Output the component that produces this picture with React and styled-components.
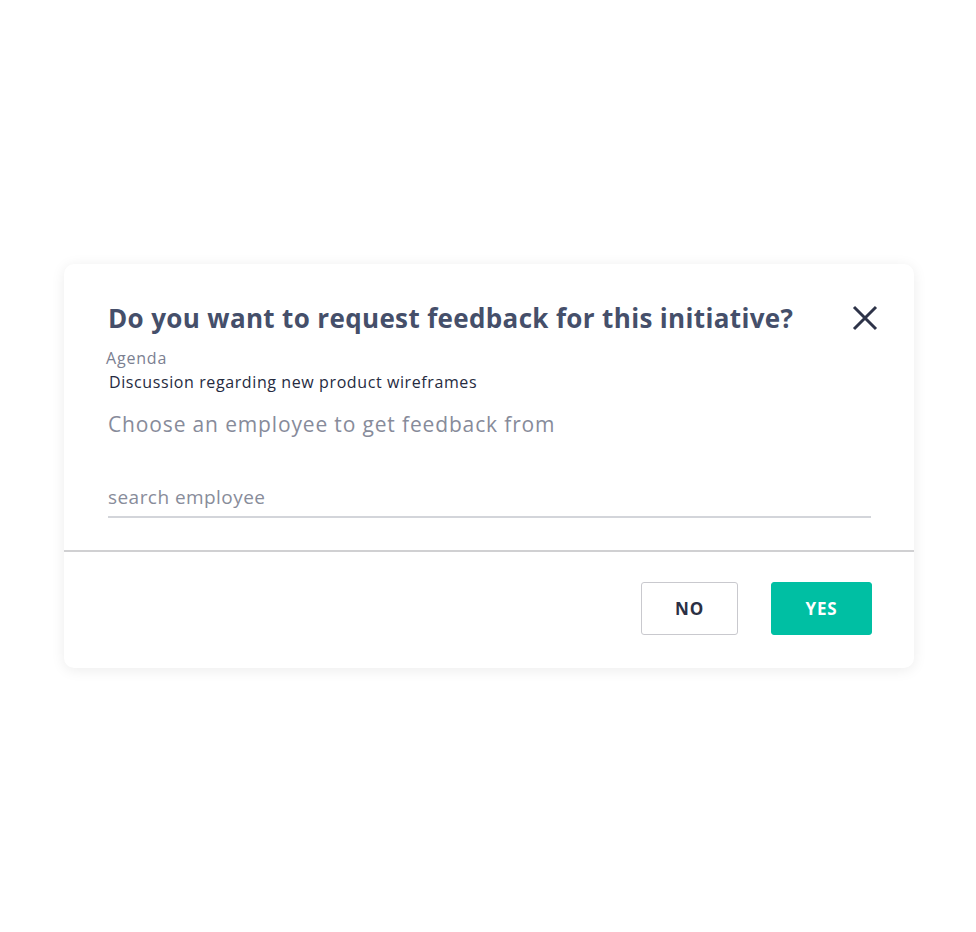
import React from 'react';
import styled, { createGlobalStyle } from 'styled-components';

const GlobalStyle = createGlobalStyle`
  html, body {
    margin: 0;
    padding: 0;
    background: #ffffff;
  }
  body {
    font-family: "Open Sans", "Noto Sans", sans-serif;
  }
`;

const Page = styled.div`
  width: 976px;
  height: 932px;
  display: flex;
  justify-content: center;
  padding: 264px 0 0 2px;
  box-sizing: border-box;
`;

const Card = styled.div`
  width: 850px;
  height: 404px;
  background: #fff;
  border-radius: 10px;
  box-shadow: 0 2px 14px rgba(0, 0, 0, 0.08);
  display: flex;
  flex-direction: column;
`;

const Body = styled.div`
  padding: 36px 36px 0 44px;
  height: 288px;
  box-sizing: border-box;
  border-bottom: 2px solid #d0d0d2;
`;

const Header = styled.div`
  display: flex;
  align-items: center;
  justify-content: space-between;
`;

const Title = styled.h2`
  margin: 0;
  font-size: 26px;
  font-weight: 700;
  color: #454f6a;
  letter-spacing: 0.35px;
`;

const CloseButton = styled.button`
  border: none;
  background: none;
  padding: 0;
  width: 26px;
  height: 26px;
  display: flex;
  cursor: pointer;
`;

const Label = styled.div`
  margin-top: 12px;
  margin-left: -2px;
  font-size: 16px;
  letter-spacing: ${(p) => p.$ls}px;
  color: ${(p) => p.$color};
  line-height: 20px;
  & + & {
    margin-top: 4px;
    margin-left: 1px;
  }
`;

const Prompt = styled.p`
  margin: 18px 0 0;
  font-size: 21px;
  letter-spacing: 0.85px;
  color: #878b9a;
`;

const SearchInput = styled.input`
  display: block;
  margin-top: 46px;
  width: 763px;
  border: none;
  border-bottom: 2px solid #d3d5da;
  padding: 0 0 6px;
  font-family: inherit;
  font-size: 19px;
  letter-spacing: 0.45px;
  color: #555;
  outline: none;
  &::placeholder {
    color: #888c9a;
  }
`;

const Footer = styled.div`
  flex: 1;
  display: flex;
  justify-content: flex-end;
  align-items: flex-start;
  gap: 33px;
  padding: 30px 42px 0 0;
`;

const Button = styled.button`
  height: 53px;
  width: ${(p) => p.$w}px;
  border-radius: 3px;
  font-family: inherit;
  font-size: 17px;
  font-weight: 700;
  letter-spacing: 0.8px;
  cursor: pointer;
  border: 1px solid ${(p) => (p.$primary ? '#00bfa3' : '#c9c9ce')};
  background: ${(p) => (p.$primary ? '#00bfa3' : '#fff')};
  color: ${(p) => (p.$primary ? '#fff' : '#2b3044')};
`;

export default function App() {
  return (
    <>
      <GlobalStyle />
      <Page>
        <Card>
          <Body>
            <Header>
              <Title>Do you want to request feedback for this initiative?</Title>
              <CloseButton aria-label="close">
                <svg width="26" height="26" viewBox="0 0 26 26">
                  <path d="M2 2 L24 24 M24 2 L2 24" stroke="#2d3348" strokeWidth="3" />
                </svg>
              </CloseButton>
            </Header>
            <Label $color="#7b8091" $ls={0.8}>Agenda</Label>
            <Label $color="#262b3f" $ls={0.6}>Discussion regarding new product wireframes</Label>
            <Prompt>Choose an employee to get feedback from</Prompt>
            <SearchInput placeholder="search employee" />
          </Body>
          <Footer>
            <Button $w={97}>NO</Button>
            <Button $w={101} $primary>YES</Button>
          </Footer>
        </Card>
      </Page>
    </>
  );
}
